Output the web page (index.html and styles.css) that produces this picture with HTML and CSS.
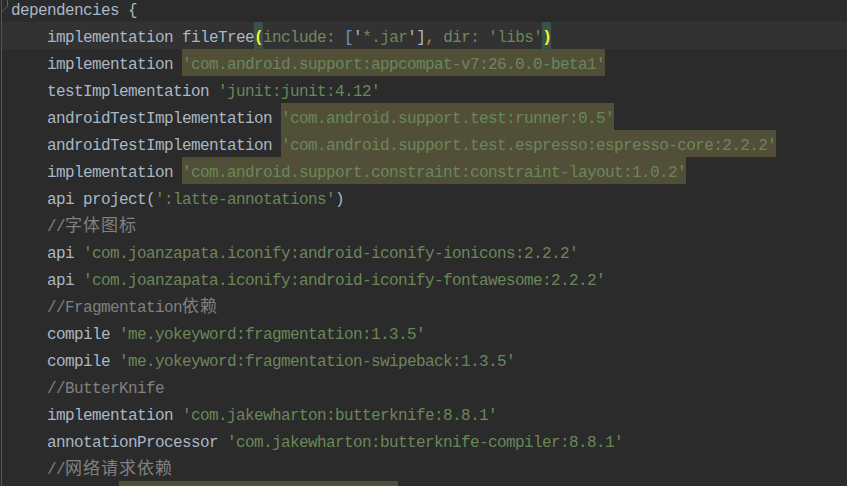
FILE: index.html
```html
<!DOCTYPE html>
<html lang="en">
<head>
  <meta charset="UTF-8">
  <title>build.gradle</title>
  <link rel="stylesheet" href="styles.css">
</head>
<body>

  <div class="editor">
    <svg class="fold" width="10" height="20" viewBox="0 0 10 20">
      <path d="M7.5 0 V6 L2.5 11.5" fill="none" stroke="#5e5e5e" stroke-width="1"/>
    </svg>

    <div class="line">dependencies {</div>
    <div class="line current">    implementation fileTree<span class="brace">(</span><span class="label">include:</span> <span class="num">[</span>'<span class="str">*.jar</span>'<span>]</span><span class="kw">,</span> <span class="label">dir:</span> <span class="str">'libs'</span><span class="brace">)</span></div>
    <div class="line">    implementation <span class="str hl">'com.android.support:appcompat-v7:26.0.0-beta1'</span></div>
    <div class="line">    testImplementation <span class="str">'junit:junit:4.12'</span></div>
    <div class="line">    androidTestImplementation <span class="str hl">'com.android.support.test:runner:0.5'</span></div>
    <div class="line">    androidTestImplementation <span class="str hl">'com.android.support.test.espresso:espresso-core:2.2.2'</span></div>
    <div class="line">    implementation <span class="str hl">'com.android.support.constraint:constraint-layout:1.0.2'</span></div>
    <div class="line">    api project(<span class="str">':latte-annotations'</span>)</div>
    <div class="line">    <span class="comment">//<span class="cjk">字体图标</span></span></div>
    <div class="line">    api <span class="str">'com.joanzapata.iconify:android-iconify-ionicons:2.2.2'</span></div>
    <div class="line">    api <span class="str">'com.joanzapata.iconify:android-iconify-fontawesome:2.2.2'</span></div>
    <div class="line">    <span class="comment">//Fragmentation<span class="cjk">依赖</span></span></div>
    <div class="line">    compile <span class="str">'me.yokeyword:fragmentation:1.3.5'</span></div>
    <div class="line">    compile <span class="str">'me.yokeyword:fragmentation-swipeback:1.3.5'</span></div>
    <div class="line">    <span class="comment">//ButterKnife</span></div>
    <div class="line">    implementation <span class="str">'com.jakewharton:butterknife:8.8.1'</span></div>
    <div class="line">    annotationProcessor <span class="str">'com.jakewharton:butterknife-compiler:8.8.1'</span></div>
    <div class="line">    <span class="comment">//<span class="cjk">网络请求依赖</span></span></div>
    <div class="line">            <span class="hl tail"></span></div>
  </div>

</body>
</html>
```

FILE: styles.css
```css
body {
  margin: 0;
  padding: 0;
  background-color: #2b2b2b;
  height: 486px;
  overflow: hidden;
}

.editor {
  position: relative;
  margin-top: -5px;
  margin-left: 1px;
  border-left: 1px solid #555555;
  padding-left: 9px;
  height: 491px;
  overflow: hidden;
  font-family: "Liberation Mono", "DejaVu Sans Mono", monospace;
  font-size: 16px;
  letter-spacing: -0.6px;
  color: #a9b7c6;
}

.fold {
  position: absolute;
  top: 5px;
  left: -2px;
}

.line {
  height: 27px;
  line-height: 33px;
  white-space: pre;
  margin-left: -10px;
  padding-left: 10px;
}

.line.current {
  background-color: #323232;
}

.str {
  color: #6a8759;
}

.label {
  color: #72885f;
}

.num {
  color: #6897bb;
}

.kw {
  color: #cc7832;
}

.comment {
  color: #808080;
}

.cjk {
  font-family: "Noto Sans CJK SC", sans-serif;
  font-size: 17px;
  line-height: 20px;
  letter-spacing: 1px;
}

.hl,
.brace {
  display: inline-block;
  height: 27px;
  vertical-align: baseline;
}

.hl {
  background-color: #524f38;
}

.hl.tail {
  width: 279px;
  vertical-align: top;
}

.brace {
  background-color: #3b514d;
  color: #ffef28;
  font-weight: bold;
}
```
